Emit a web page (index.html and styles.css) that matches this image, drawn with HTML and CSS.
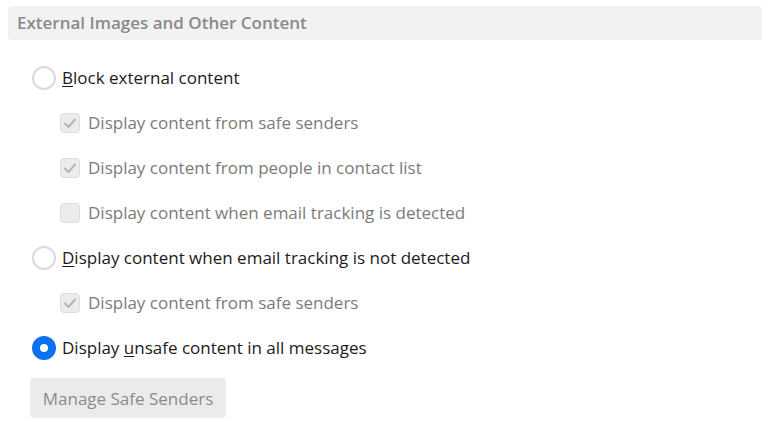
FILE: index.html
```html
<!DOCTYPE html>
<html>
<head>
<meta charset="utf-8">
<link rel="stylesheet" href="styles.css">
</head>
<body>
<div class="panel">
  <div class="header">External Images and Other Content</div>
  <div class="options">
    <div class="row radio-row">
      <span class="radio"></span>
      <span class="label"><u>B</u>lock external content</span>
    </div>
    <div class="row check-row">
      <span class="check checked"><svg viewBox="0 0 18 18"><path d="M4 9.5 L7.5 13 L14 5.5" /></svg></span>
      <span class="label dim">Display content from safe senders</span>
    </div>
    <div class="row check-row">
      <span class="check checked"><svg viewBox="0 0 18 18"><path d="M4 9.5 L7.5 13 L14 5.5" /></svg></span>
      <span class="label dim">Display content from people in contact list</span>
    </div>
    <div class="row check-row">
      <span class="check"></span>
      <span class="label dim">Display content when email tracking is detected</span>
    </div>
    <div class="row radio-row">
      <span class="radio"></span>
      <span class="label"><u>D</u>isplay content when email tracking is not detected</span>
    </div>
    <div class="row check-row">
      <span class="check checked"><svg viewBox="0 0 18 18"><path d="M4 9.5 L7.5 13 L14 5.5" /></svg></span>
      <span class="label dim">Display content from safe senders</span>
    </div>
    <div class="row radio-row">
      <span class="radio selected"></span>
      <span class="label">Display <u>u</u>nsafe content in all messages</span>
    </div>
    <div class="btn-row">
      <button class="btn">Manage Safe Senders</button>
    </div>
  </div>
</div>
</body>
</html>
```
FILE: styles.css
```css
html, body {
  margin: 0;
  padding: 0;
  background: #ffffff;
}
body {
  font-family: "Open Sans", "Noto Sans", sans-serif;
  color: #1b1b1b;
}
.panel {
  padding: 6px 6px 0 8px;
}
.header {
  height: 34px;
  line-height: 34px;
  background: #f2f2f2;
  border-radius: 4px;
  padding-left: 9px;
  font-size: 17px;
  font-weight: 600;
  color: #8a8a8a;
}
.options {
  margin-top: 15px;
}
.row {
  height: 45px;
  display: flex;
  align-items: center;
}
.radio-row {
  padding-left: 24px;
}
.check-row {
  padding-left: 52px;
}
.label {
  font-size: 17px;
  white-space: nowrap;
}
.label u {
  text-underline-offset: 2px;
}
.radio-row .label {
  margin-left: 6px;
}
.check-row .label {
  margin-left: 8px;
}
.dim {
  color: #7b7b7b;
}
.radio {
  width: 24px;
  height: 24px;
  box-sizing: border-box;
  border-radius: 50%;
  border: 2px solid #dadada;
  background: #fff;
  flex: none;
}
.radio.selected {
  border: 8px solid #0a72ee;
}
.check {
  width: 20px;
  height: 20px;
  box-sizing: border-box;
  border-radius: 4px;
  border: 1px solid #dcdcdc;
  background: #ececec;
  flex: none;
  display: flex;
}
.check svg {
  width: 18px;
  height: 18px;
}
.check path {
  fill: none;
  stroke: #b5b5b5;
  stroke-width: 2;
  stroke-linecap: round;
  stroke-linejoin: round;
}
.btn-row {
  margin-top: 8px;
  padding-left: 22px;
}
.btn {
  width: 196px;
  height: 40px;
  border: none;
  border-radius: 4px;
  background: #ebebeb;
  color: #8c8c8c;
  font-family: "Open Sans", "Noto Sans", sans-serif;
  font-size: 17px;
  padding: 0;
}
```
